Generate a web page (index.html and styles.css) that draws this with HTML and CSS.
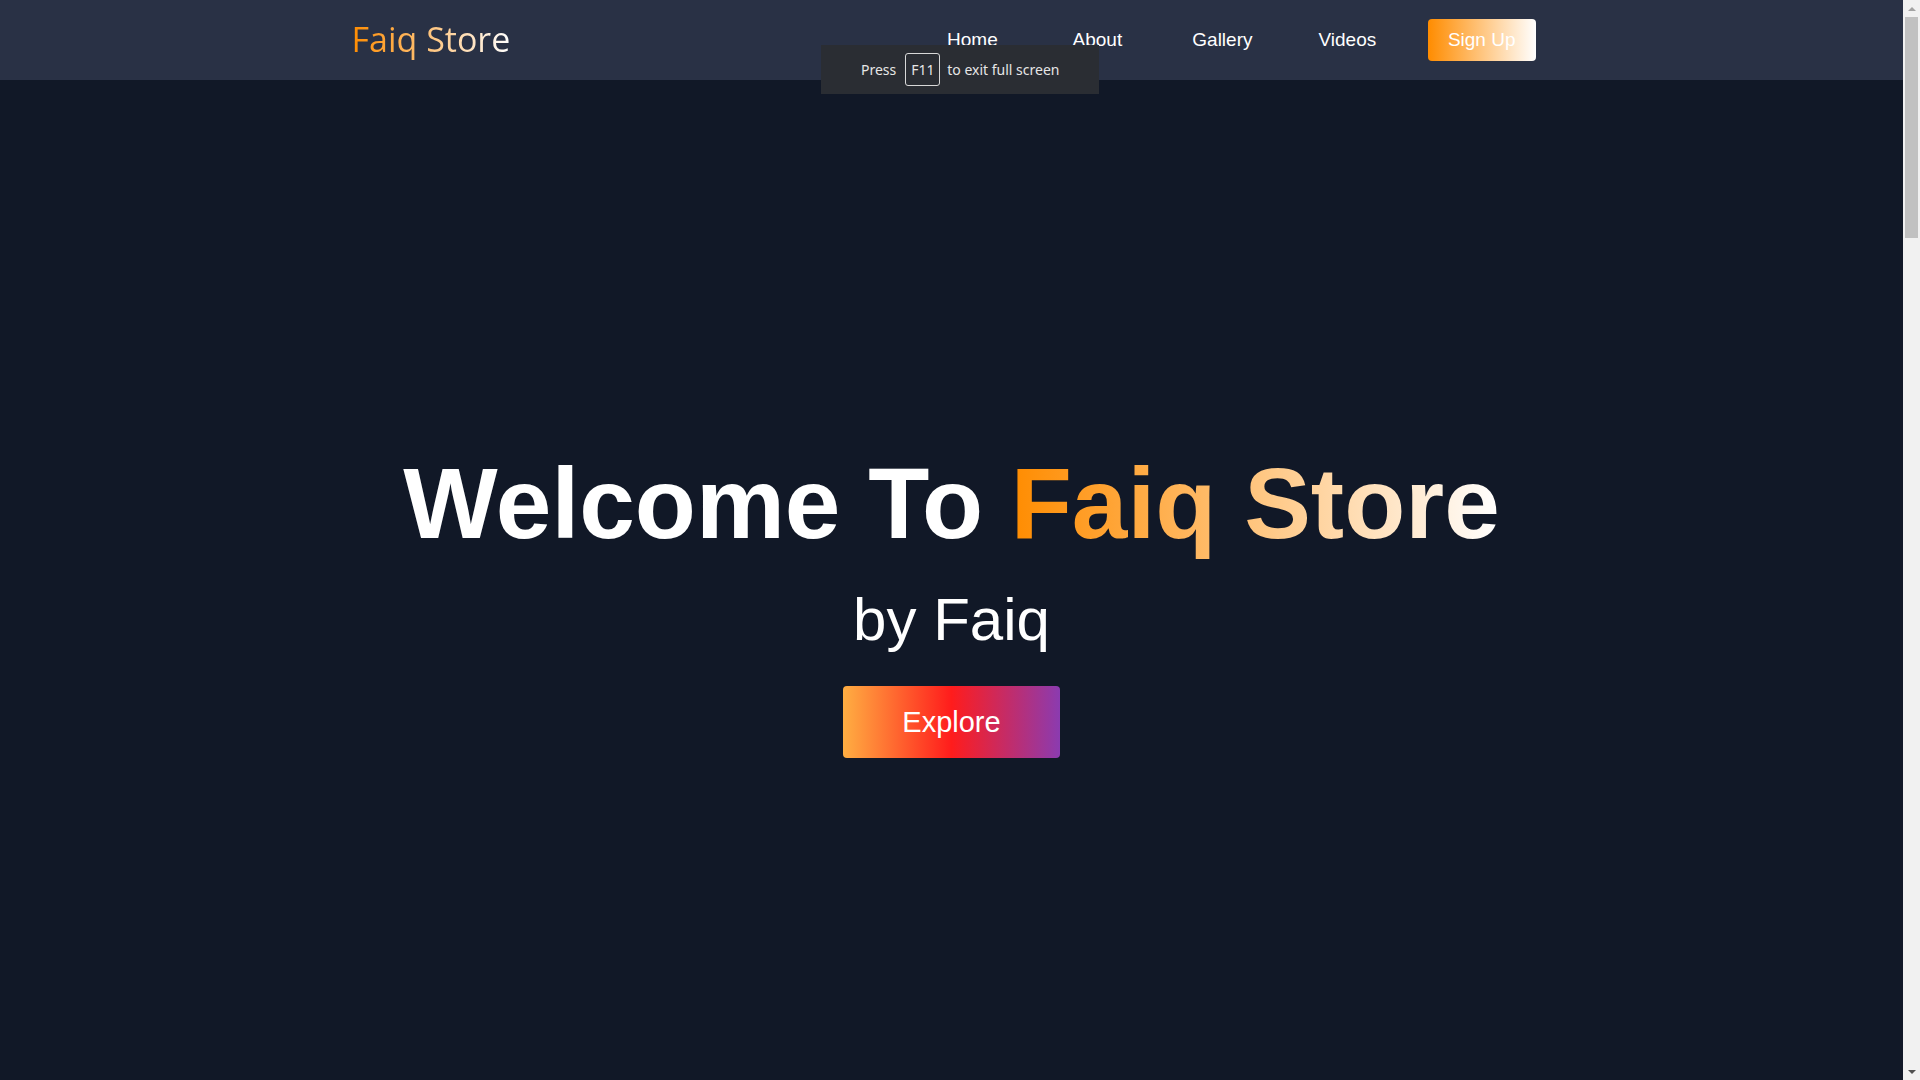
FILE: index.html
```html
<!DOCTYPE html>
<html lang="en">
<head>
<meta charset="UTF-8">
<title>Faiq Store</title>
<link rel="stylesheet" href="styles.css">
</head>
<body>
<header class="navbar">
  <div class="nav-inner">
    <a class="logo" href="#">Faiq Store</a>
    <nav class="nav-links">
      <a class="nav-link" href="#">Home</a>
      <a class="nav-link" href="#">About</a>
      <a class="nav-link" href="#">Gallery</a>
      <a class="nav-link" href="#">Videos</a>
      <a class="signup" href="#">Sign Up</a>
    </nav>
  </div>
</header>

<div class="fs-toast">
  <span>Press</span>
  <span class="key">F11</span>
  <span>to exit full screen</span>
</div>

<main class="hero">
  <h1 class="title">Welcome To <span class="grad">Faiq Store</span></h1>
  <p class="sub">by Faiq</p>
  <a class="explore" href="#">Explore</a>
</main>

<div class="scrollbar" aria-hidden="true">
  <div class="sb-btn"><span class="arrow-up"></span></div>
  <div class="sb-track"><div class="sb-thumb"></div></div>
  <div class="sb-btn"><span class="arrow-down"></span></div>
</div>
</body>
</html>
```

FILE: styles.css
```css
html, body {
  margin: 0;
  padding: 0;
}
html {
  overflow: hidden;
}
body {
  background: #111827;
  color: #fff;
  font-family: "Liberation Sans", Arial, sans-serif;
  margin-right: 17px;
  min-height: 1080px;
}
a { text-decoration: none; color: inherit; }

.navbar {
  background: #293145;
  height: 80px;
}
.nav-inner {
  width: 1200px;
  margin: 0 auto;
  height: 80px;
  display: flex;
  align-items: center;
  justify-content: space-between;
  box-sizing: border-box;
  padding-right: 16px;
}
.logo {
  font-family: "Open Sans", sans-serif;
  font-size: 34px;
  font-weight: 400;
  background: linear-gradient(to right, #ff8c00, #ffffff);
  -webkit-background-clip: text;
  background-clip: text;
  color: transparent;
  margin-top: -2px;
}
.nav-links {
  display: flex;
  align-items: center;
}
.nav-link {
  width: 125px;
  text-align: center;
  font-size: 19px;
  color: #fff;
}
.signup {
  margin-left: 18px;
  font-size: 19px;
  padding: 10px 20px;
  border-radius: 4px;
  background: linear-gradient(to right, #ff8c00, #ffffff);
  color: #fff;
}

.fs-toast {
  position: fixed;
  left: 821px;
  top: 45px;
  height: 49px;
  box-sizing: border-box;
  padding: 0 40px;
  background: #2a2d33;
  color: #e6e6e6;
  font-family: "Noto Sans", sans-serif;
  font-size: 14px;
  display: flex;
  align-items: center;
}
.key {
  display: flex;
  align-items: center;
  justify-content: center;
  width: 35px;
  height: 33px;
  box-sizing: border-box;
  border: 1px solid #d8d8d8;
  border-radius: 3px;
  margin: 0 7px 0 9px;
}

.hero {
  padding-top: 366px;
  display: flex;
  flex-direction: column;
  align-items: center;
}
.title {
  margin: 0;
  font-size: 100px;
  line-height: 1.15;
  font-weight: 700;
  color: #fff;
}
.grad {
  background: linear-gradient(to right, #ff8c00, #ffffff);
  -webkit-background-clip: text;
  background-clip: text;
  color: transparent;
}
.sub {
  margin: 24px 0 0;
  font-size: 60px;
  line-height: 1.15;
  color: #fff;
}
.explore {
  margin-top: 32px;
  font-size: 29px;
  line-height: 1.15;
  padding: 19.5px 59px;
  border-radius: 4px;
  color: #fff;
  background: linear-gradient(to right, #ffae42 0%, #ff1c1c 50%, #8b3bb0 100%);
}

.scrollbar {
  position: fixed;
  top: 0;
  right: 0;
  width: 17px;
  height: 1080px;
  background: #f1f1f1;
  display: flex;
  flex-direction: column;
}
.sb-btn {
  height: 17px;
  display: flex;
  align-items: center;
  justify-content: center;
}
.arrow-up {
  width: 0;
  height: 0;
  border-left: 4px solid transparent;
  border-right: 4px solid transparent;
  border-bottom: 4px solid #a3a3a3;
}
.arrow-down {
  width: 0;
  height: 0;
  border-left: 4px solid transparent;
  border-right: 4px solid transparent;
  border-top: 4px solid #505050;
}
.sb-track {
  flex: 1;
}
.sb-thumb {
  margin: 0 2px;
  height: 221px;
  background: #c1c1c1;
}
```
